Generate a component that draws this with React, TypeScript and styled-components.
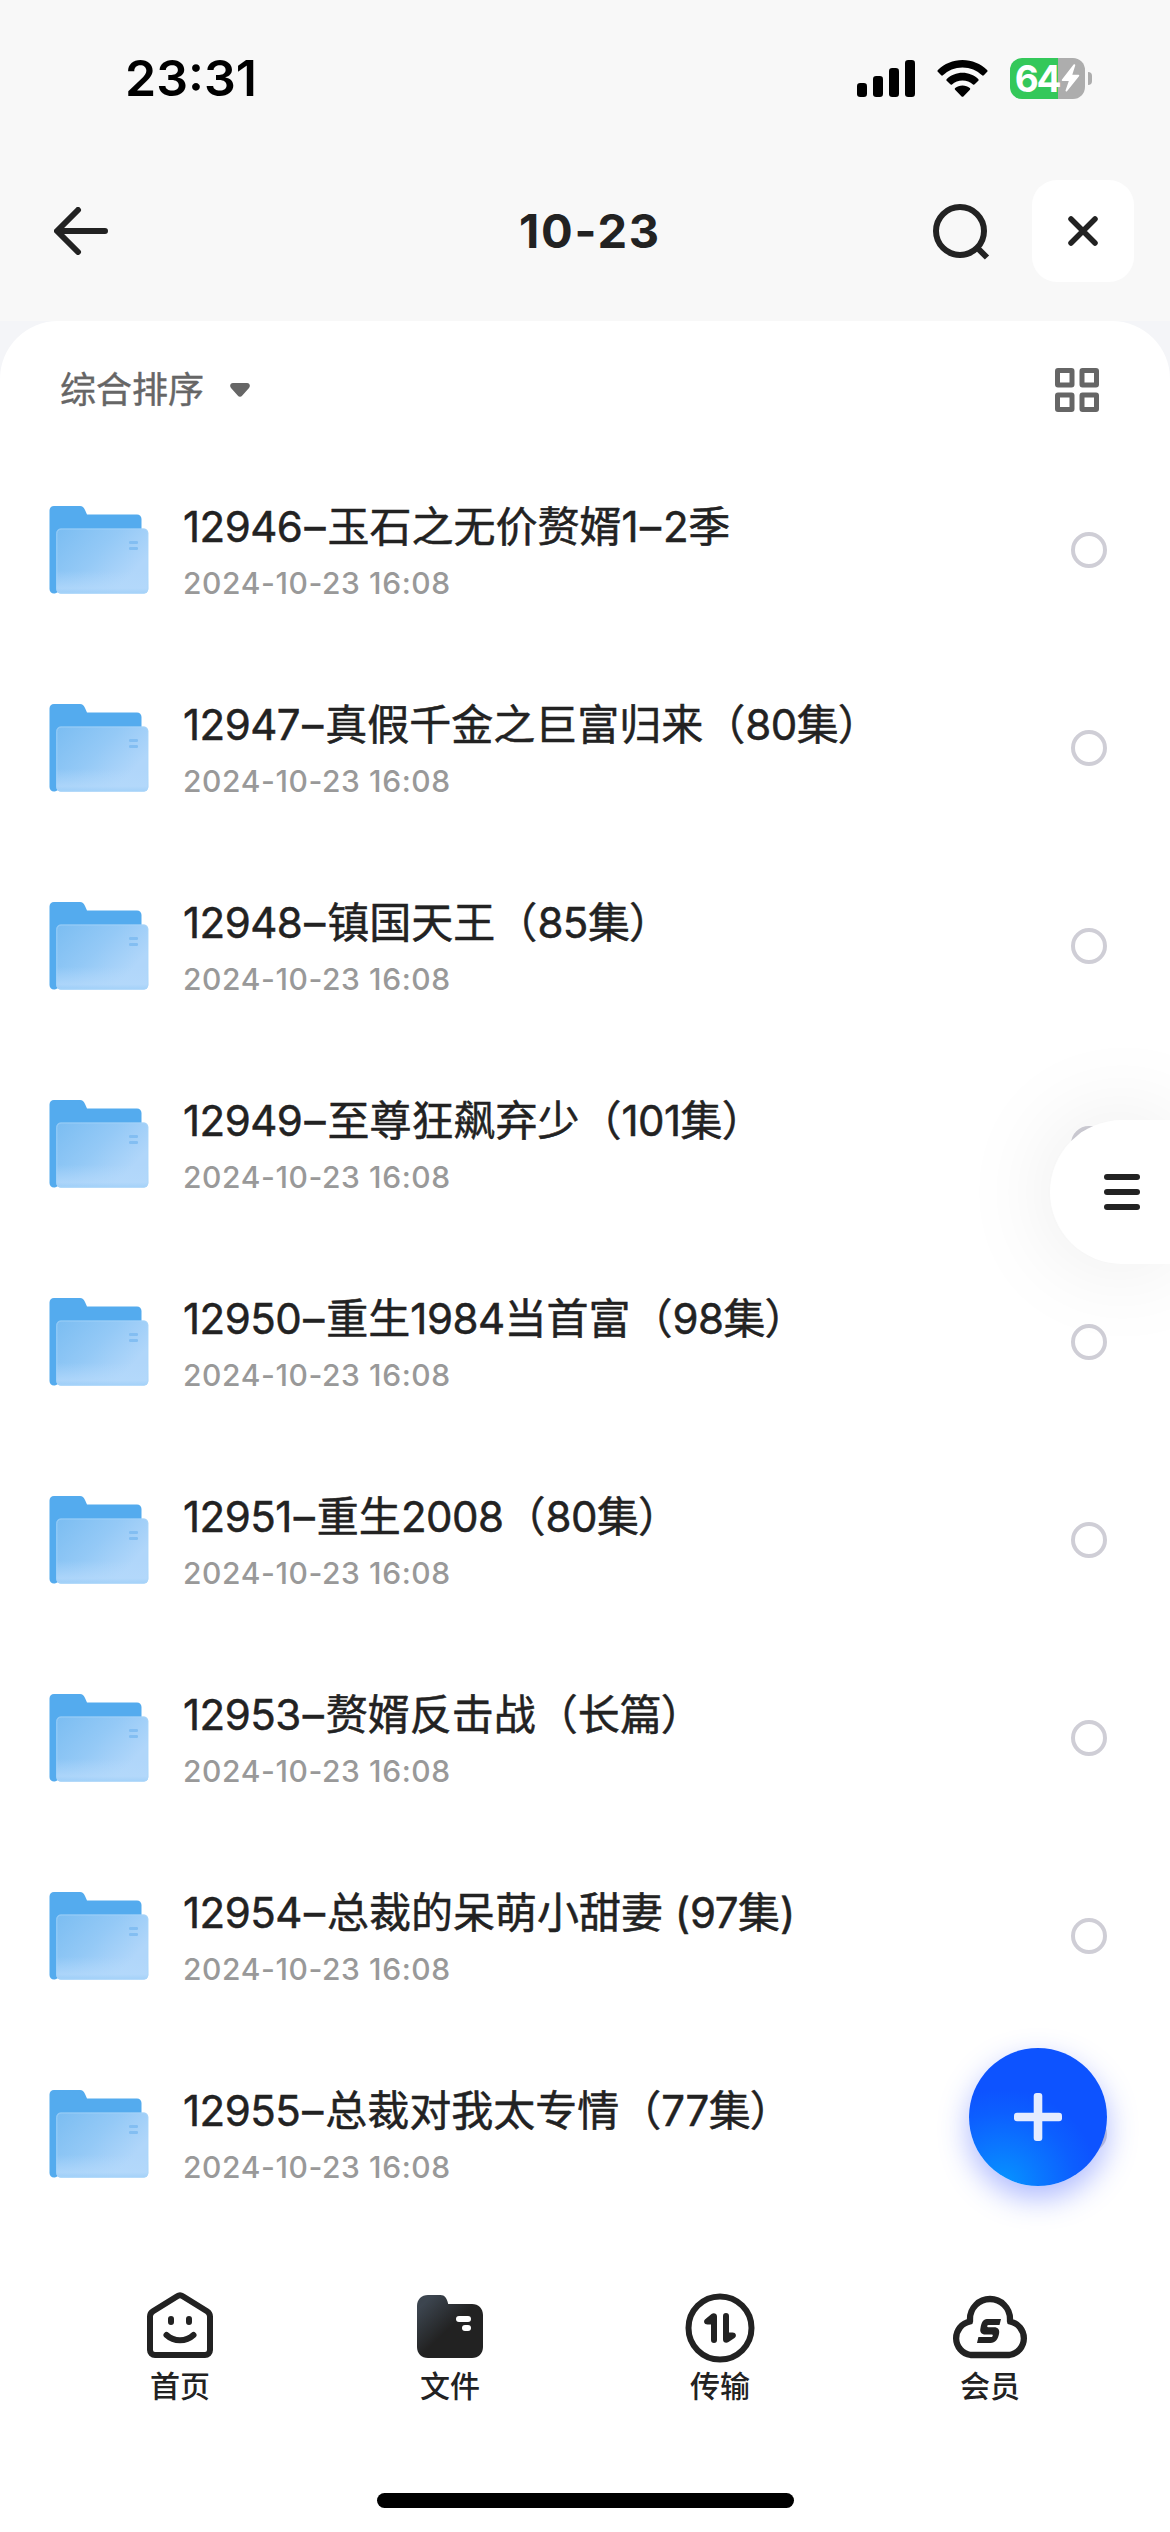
import React from 'react';
import styled, { createGlobalStyle } from 'styled-components';

const Global = createGlobalStyle`
  * { box-sizing: border-box; }
  html, body { margin: 0; padding: 0; background: #f4f5f8; }
  body { font-family: Inter, "Noto Sans CJK SC", sans-serif; color: #222; }
`;

const Screen = styled.div`
  position: relative;
  display: flex;
  flex-direction: column;
  width: 1170px;
  height: 2532px;
  overflow: hidden;
  background: #f4f5f8;
`;

const Top = styled.header`
  height: 321px;
  background: #f8f8f8;
`;

const StatusBar = styled.div`
  display: flex;
  align-items: center;
  justify-content: space-between;
  height: 156px;
  padding: 0 78px 0 125px;
`;

const Clock = styled.span`
  font-size: 50px;
  font-weight: 600;
  line-height: 60px;
  color: #000;
`;

const StatusIcons = styled.div`
  display: flex;
  align-items: center;
  gap: 22px;
`;

const BatteryWrap = styled.div`
  display: flex;
  align-items: center;
  gap: 3px;
`;

const Battery = styled.div`
  display: flex;
  align-items: center;
  justify-content: center;
  gap: 2px;
  width: 75px;
  height: 41px;
  border-radius: 12px;
  color: #fff;
  background: linear-gradient(90deg, #34c85a 0 48px, #adadad 48px);
`;

const Level = styled.span`
  font-size: 37px;
  font-weight: 700;
  line-height: 41px;
  letter-spacing: -2.4px;
`;

const BatteryTip = styled.i`
  width: 4px;
  height: 13px;
  border-radius: 0 4px 4px 0;
  background: #adadad;
`;

const NavBar = styled.div`
  display: grid;
  grid-template-columns: 1fr auto 1fr;
  align-items: center;
  height: 150px;
  padding: 0 36px 0 36px;
`;

const BackSlot = styled.div`
  display: flex;
  padding-left: 18px;
`;

const Title = styled.h1`
  margin: 0 0 0 10px;
  font-size: 47px;
  font-weight: 700;
  line-height: 60px;
  letter-spacing: 1.8px;
`;

const NavActions = styled.div`
  display: flex;
  align-items: center;
  justify-content: flex-end;
  gap: 42px;
`;

const CloseButton = styled.button`
  display: flex;
  align-items: center;
  justify-content: center;
  width: 102px;
  height: 102px;
  padding: 0;
  border: 0;
  border-radius: 25px;
  background: #fff;
`;

const Panel = styled.main`
  height: 1912px;
  border-radius: 58px 58px 0 0;
  background: #fff;
`;

const Toolbar = styled.div`
  display: flex;
  align-items: center;
  justify-content: space-between;
  height: 130px;
  padding: 8px 71px 0 60px;
`;

const Sort = styled.div`
  display: flex;
  align-items: center;
  gap: 26px;
  font-size: 36px;
  line-height: 50px;
  color: #666;
  -webkit-text-stroke: 0.4px #666;
`;

const Row = styled.div`
  display: flex;
  align-items: center;
  height: 198px;
  padding: 0 63px 0 49px;
`;

const RowText = styled.div`
  flex: 1;
  padding: 0 0 0 34px;
  white-space: nowrap;
`;

const Name = styled.div`
  height: 58px;
  font-size: 42px;
  line-height: 58px;
  color: #222;
  -webkit-text-stroke: 0.5px #222;
`;

const Digits = styled.span`
  letter-spacing: -0.5px;
`;

const Dash = styled.span`
  padding: 0 2px;
`;

const Closing = styled.span`
  margin-left: -1px;
`;

const Stamp = styled.div`
  height: 40px;
  margin-top: 7px;
  font-size: 30px;
  font-weight: 500;
  line-height: 40px;
  letter-spacing: 0.6px;
  color: #999;
`;

const Radio = styled.span`
  width: 36px;
  height: 36px;
  border: 4px solid #cfced6;
  border-radius: 50%;
`;

const TabBar = styled.nav`
  display: flex;
  height: 299px;
  padding: 54px 45px 0;
  background: #fff;
`;

const Tab = styled.div`
  display: flex;
  flex: 1;
  flex-direction: column;
  align-items: center;
  font-size: 30px;
  font-weight: 500;
  line-height: 39px;
`;

const HomeIndicator = styled.div`
  position: absolute;
  left: 377px;
  bottom: 24px;
  width: 417px;
  height: 15px;
  border-radius: 8px;
  background: #000;
`;

const SideHandle = styled.div`
  position: absolute;
  top: 1120px;
  right: 0;
  display: flex;
  flex-direction: column;
  justify-content: center;
  gap: 9px;
  width: 120px;
  height: 144px;
  padding-left: 54px;
  border-radius: 72px 0 0 72px;
  background: #fff;
  box-shadow: 0 0 100px rgba(0, 0, 0, 0.09);
`;

const HandleLine = styled.i`
  width: 36px;
  height: 6px;
  border-radius: 3px;
  background: #222;
`;

const AddButton = styled.div`
  position: absolute;
  left: 969px;
  top: 2048px;
  display: flex;
  align-items: center;
  justify-content: center;
  width: 138px;
  height: 138px;
  border-radius: 50%;
  background: radial-gradient(circle at 24% 100%, #0696ff 0, #0a78ff 22%, #0c5fff 42%, #0d53ff 56%);
  box-shadow: 0 12px 30px rgba(50, 80, 255, 0.4);
`;

const Signal = () => (
  <svg width="58" height="37" viewBox="0 0 58 37">
    <rect x="0" y="23" width="10" height="14" rx="3.2" />
    <rect x="16" y="16" width="10" height="21" rx="3.2" />
    <rect x="32" y="8" width="10" height="29" rx="3.2" />
    <rect x="48" y="0" width="10" height="37" rx="3.2" />
  </svg>
);

const Wifi = () => (
  <svg width="51" height="37" viewBox="0 0 51 37">
    <path d="M25.5 0C35 0 43.700 3.800 50.100 10c.6.6.6 1.300.1 1.800l-3.400 3.500c-.5.500-1.200.5-1.700 0C40 10.400 33.100 7.400 25.500 7.400S11 10.400 5.900 15.300c-.5.500-1.200.5-1.700 0L.8 11.800c-.5-.5-.5-1.200.1-1.800C7.300 3.800 16 0 25.500 0z" />
    <path d="M25.500 12.800c6 0 11.500 2.300 15.700 6.100.6.600.6 1.300.1 1.800l-3.600 3.600c-.5.500-1.200.5-1.700.1-2.800-2.500-6.500-4-10.500-4s-7.700 1.500-10.500 4c-.5.400-1.200.4-1.700-.1l-3.600-3.600c-.5-.5-.5-1.200.1-1.800 4.200-3.800 9.700-6.100 15.700-6.100z" />
    <path d="M25.500 25.400c2.800 0 5.300 1 7.300 2.600.6.500.6 1.200.1 1.700l-6.500 6.700c-.5.600-1.300.6-1.800 0l-6.500-6.700c-.5-.5-.5-1.200.1-1.700 2-1.600 4.500-2.600 7.300-2.600z" />
  </svg>
);

const Bolt = () => (
  <svg width="19" height="28" viewBox="0 0 19 28">
    <path fill="#fff" d="M12.600.6 1 15.500c-.6.8-.2 1.400.6 1.400h6.200L4.600 26.200c-.4 1.300.8 1.800 1.600.8L18 12.200c.6-.8.2-1.400-.6-1.400h-6.100l2.900-9.300C14.600.2 13.400-.3 12.600.6z" />
  </svg>
);

const BackArrow = () => (
  <svg width="54" height="48" viewBox="0 0 54 48" fill="none" stroke="#222" strokeWidth="6" strokeLinecap="round" strokeLinejoin="round">
    <path d="M24 3 3 24l21 21M4 24h47" />
  </svg>
);

const SearchIcon = () => (
  <svg width="57" height="58" viewBox="0 0 57 58" fill="none" stroke="#222" strokeWidth="6">
    <circle cx="27" cy="29" r="24" />
    <path d="m44 45.500 10 10" />
  </svg>
);

const CloseIcon = () => (
  <svg width="30" height="30" viewBox="0 0 30 30" fill="none" stroke="#222" strokeWidth="5.500" strokeLinecap="round">
    <path d="m3 3 24 24M27 3 3 27" />
  </svg>
);

const Caret = () => (
  <svg width="20" height="14" viewBox="0 0 20 14">
    <path fill="#666" d="M3 0h14c2.600 0 3.800 3 2 4.900l-6.700 7.700c-1.300 1.600-3.300 1.600-4.600 0L1 4.900C-.8 3 .4 0 3 0z" />
  </svg>
);

const GridIcon = () => (
  <svg width="44" height="44" viewBox="0 0 44 44" fill="none" stroke="#666" strokeWidth="5">
    <rect x="2.500" y="2.500" width="14.500" height="14.500" rx=".5" />
    <rect x="27" y="2.500" width="14.500" height="14.500" rx=".5" />
    <rect x="2.500" y="27" width="14.500" height="14.500" rx=".5" />
    <rect x="27" y="27" width="14.500" height="14.500" rx=".5" />
  </svg>
);

const FolderDefs = () => (
  <svg width="0" height="0" style={{ position: 'absolute' }}>
    <defs>
      <linearGradient id="front" x1="0" y1="0.1" x2="1" y2="0.75">
        <stop offset="0" stopColor="#7dbef2" />
        <stop offset="0.45" stopColor="#94c9f6" />
        <stop offset="0.85" stopColor="#b0d6fa" />
      </linearGradient>
      <linearGradient id="sheen" x1="0" y1="0" x2="0" y2="1">
        <stop offset="0.65" stopColor="#b4d9fb" stopOpacity="0" />
        <stop offset="0.92" stopColor="#b4d9fb" stopOpacity="0.75" />
        <stop offset="1" stopColor="#9fcff8" stopOpacity="0.8" />
      </linearGradient>
      <linearGradient id="tabFolder" x1="0" y1="0" x2="0.6" y2="0.6">
        <stop offset="0.2" stopColor="#3c454f" />
        <stop offset="0.85" stopColor="#222" />
      </linearGradient>
    </defs>
  </svg>
);

const Folder = () => (
  <svg width="100" height="88" viewBox="0 0 100 88">
    <path fill="#54abee" d="M5 0h26c2.500 0 3.800 1.200 5 4l2 4.400h50c2.600 0 4.500 1.900 4.500 4.500V40L8 86.500c-1 .8-2 1-3 1-2.600 0-4.500-1.900-4.500-4.500V4.500C.5 1.900 2.400 0 5 0z" />
    <rect x="7.300" y="22.500" width="92" height="65" rx="4.500" fill="url(#front)" />
    <rect x="7.300" y="22.500" width="92" height="65" rx="4.500" fill="url(#sheen)" />
    <rect x="7.800" y="23" width="91" height="64" rx="4.200" fill="none" stroke="#a9d5fa" strokeOpacity=".7" />
    <rect x="80" y="35" width="9" height="3" rx="1.200" fill="#83bef2" />
    <rect x="80" y="41" width="9" height="3" rx="1.200" fill="#83bef2" />
  </svg>
);

const PlusIcon = () => (
  <svg width="48" height="48" viewBox="0 0 48 48" fill="#e4ecff">
    <rect x="19.700" y="0" width="8.600" height="48" rx="3" />
    <rect x="0" y="19.700" width="48" height="8.600" rx="3" />
  </svg>
);

const HomeIcon = () => (
  <svg width="80" height="80" viewBox="0 0 80 80" fill="none" stroke="#222" strokeWidth="6" strokeLinecap="round">
    <path d="M37.200 9.200a5 5 0 0 1 5.600 0L67 24.200c2 1.300 3 3 3 5.300V63a5 5 0 0 1-5 5H15a5 5 0 0 1-5-5V29.500c0-2.300 1-4 3-5.300z" />
    <path d="M31 32v3M49 32v3M26.500 48c7.500 7 19.500 7 27 0" />
  </svg>
);

const FilesIcon = () => (
  <svg width="80" height="80" viewBox="0 0 80 80">
    <path fill="url(#tabFolder)" d="M18 8h12.500c4.200 0 6.300 2.800 7.700 9H62c6.500 0 11 4.500 11 11v32c0 6.500-4.500 11-11 11H18c-6.500 0-11-4.500-11-11V19C7 12.500 11.500 8 18 8z" />
    <rect x="46" y="29" width="15" height="6" rx="3" fill="#fff" />
    <rect x="52" y="38" width="9" height="6" rx="3" fill="#fff" />
  </svg>
);

const TransferIcon = () => (
  <svg width="80" height="80" viewBox="0 0 80 80">
    <circle cx="40" cy="41" r="31.500" fill="none" stroke="#222" strokeWidth="6" />
    <path fill="#222" d="M31.500 27c2.200-1.500 5.500-.6 5.500 2.500V53a3 3 0 0 1-6 0V37.500h-3.500c-3.600 0-4.500-3.800-2-5.500z" />
    <path fill="#222" d="M48.500 55c-2.200 1.500-5.500.6-5.500-2.500V29a3 3 0 0 1 6 0v16.500h3.500c3.600 0 4.500 3.800 2 5.500z" />
  </svg>
);

const CloudIcon = () => (
  <svg width="80" height="80" viewBox="0 0 80 80" fill="none" stroke="#222">
    <path strokeWidth="6.300" strokeLinejoin="round" d="M20 34.500V32a20 20 0 0 1 40 0v2.500A17 17 0 0 1 59.500 68h-39A17 17 0 0 1 20 34.500z" />
    <path fill="#222" stroke="none" d="M37 32h14l-1.500 6H38.500c-1.600 0-1.800 2.300-.2 2.300H44c4 0 6 2.700 5 6.700-1.200 5.500-3.600 9-8.500 9H27l1.400-6h13c1.600 0 2-2.500.3-2.500h-6.200c-4.200 0-6-2.500-5-6.500C31.500 35.500 33 32 37 32z" />
  </svg>
);

const files = [
  '12946–玉石之无价赘婿1–2季',
  '12947–真假千金之巨富归来（80集）',
  '12948–镇国天王（85集）',
  '12949–至尊狂飙弃少（101集）',
  '12950–重生1984当首富（98集）',
  '12951–重生2008（80集）',
  '12953–赘婿反击战（长篇）',
  '12954–总裁的呆萌小甜妻 (97集)',
  '12955–总裁对我太专情（77集）',
];

const FileName = ({ text }: { text: string }) => (
  <Name>
    {text.split(/(\d+|–|）)/).map((part, i) => {
      if (part === '–') return <Dash key={i}>{part}</Dash>;
      if (part === '）') return <Closing key={i}>{part}</Closing>;
      if (/^\d+$/.test(part)) return <Digits key={i}>{part}</Digits>;
      return part;
    })}
  </Name>
);

const tabs = [
  { label: '首页', Icon: HomeIcon },
  { label: '文件', Icon: FilesIcon },
  { label: '传输', Icon: TransferIcon },
  { label: '会员', Icon: CloudIcon },
];

export default function App() {
  return (
    <Screen>
      <Global />
      <FolderDefs />
      <Top>
        <StatusBar>
          <Clock>23:31</Clock>
          <StatusIcons>
            <Signal />
            <Wifi />
            <BatteryWrap>
              <Battery>
                <Level>64</Level>
                <Bolt />
              </Battery>
              <BatteryTip />
            </BatteryWrap>
          </StatusIcons>
        </StatusBar>
        <NavBar>
          <BackSlot>
            <BackArrow />
          </BackSlot>
          <Title>10-23</Title>
          <NavActions>
            <SearchIcon />
            <CloseButton aria-label="close">
              <CloseIcon />
            </CloseButton>
          </NavActions>
        </NavBar>
      </Top>
      <Panel>
        <Toolbar>
          <Sort>
            综合排序
            <Caret />
          </Sort>
          <GridIcon />
        </Toolbar>
        {files.map((name) => (
          <Row key={name}>
            <Folder />
            <RowText>
              <FileName text={name} />
              <Stamp>2024-10-23 16:08</Stamp>
            </RowText>
            <Radio />
          </Row>
        ))}
      </Panel>
      <TabBar>
        {tabs.map(({ label, Icon }) => (
          <Tab key={label}>
            <Icon />
            {label}
          </Tab>
        ))}
      </TabBar>
      <HomeIndicator />
      <SideHandle>
        <HandleLine />
        <HandleLine />
        <HandleLine />
      </SideHandle>
      <AddButton>
        <PlusIcon />
      </AddButton>
    </Screen>
  );
}
